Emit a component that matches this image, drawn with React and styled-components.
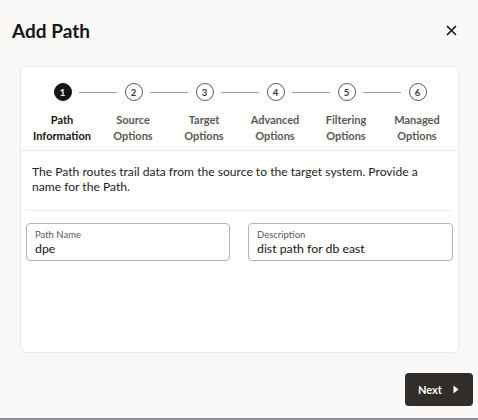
import React from "react";
import styled, { createGlobalStyle } from "styled-components";

const GlobalStyle = createGlobalStyle`
  body {
    margin: 0;
    background: #f9f8f6;
    font-family: Lato, "Noto Sans", sans-serif;
    color: #161513;
  }
`;

const steps = [
  ["Path", "Information"],
  ["Source", "Options"],
  ["Target", "Options"],
  ["Advanced", "Options"],
  ["Filtering", "Options"],
  ["Managed", "Options"],
];

function App() {
  return (
    <Page>
      <GlobalStyle />
      <Header>
        <Title>Add Path</Title>
        <CloseButton aria-label="Close">
          <svg width="11" height="11" viewBox="0 0 11 11">
            <path d="M1 1L10 10M10 1L1 10" stroke="#161513" strokeWidth="1.6" />
          </svg>
        </CloseButton>
      </Header>

      <Card>
        <Stepper>
          {steps.map((label, i) => (
            <Step key={i}>
              <StepTrack>
                <Segment $hidden={i === 0} $side="left" />
                <StepCircle $active={i === 0}>{i + 1}</StepCircle>
                <Segment $hidden={i === steps.length - 1} $side="right" />
              </StepTrack>
              <StepLabel $active={i === 0}>
                {label[0]}
                <br />
                {label[1]}
              </StepLabel>
            </Step>
          ))}
        </Stepper>

        <Content>
          <Intro>
            The Path routes trail data from the source to the target system. Provide a
            name for the Path.
          </Intro>
          <Divider />
          <Fields>
            <Field>
              <FieldLabel>Path Name</FieldLabel>
              <FieldValue>dpe</FieldValue>
            </Field>
            <Field>
              <FieldLabel>Description</FieldLabel>
              <FieldValue>dist path for db east</FieldValue>
            </Field>
          </Fields>
        </Content>
      </Card>

      <Footer>
        <NextButton>
          Next
          <svg width="6" height="9" viewBox="0 0 6 9">
            <path d="M0.5 0.5L5.5 4.5L0.5 8.5Z" fill="#ffffff" />
          </svg>
        </NextButton>
      </Footer>
      <BottomEdge />
    </Page>
  );
}

const Page = styled.div`
  width: 478px;
  height: 420px;
  display: flex;
  flex-direction: column;
  overflow: hidden;
`;

const Header = styled.div`
  display: flex;
  justify-content: space-between;
  align-items: flex-start;
  padding: 18px 21px 0 12px;
  height: 48px;
`;

const Title = styled.h1`
  margin: 0;
  font-size: 19px;
  line-height: 26px;
  font-weight: 700;
`;

const CloseButton = styled.div`
  display: flex;
  padding-top: 7px;
`;

const Card = styled.div`
  margin: 0 19px 0 20px;
  height: 287px;
  box-sizing: border-box;
  background: #ffffff;
  border: 1px solid #ebe9e6;
  border-radius: 6px;
  display: flex;
  flex-direction: column;
`;

const Stepper = styled.div`
  display: flex;
  padding: 16px 5.5px 0;
  height: 83px;
  box-sizing: border-box;
`;

const Step = styled.div`
  flex: 1;
  display: flex;
  flex-direction: column;
  align-items: center;
`;

const StepTrack = styled.div`
  width: 100%;
  display: flex;
  align-items: center;
`;

const Segment = styled.div`
  flex: 1;
  height: 1px;
  background: ${(p) => (p.$hidden ? "transparent" : "#a09d99")};
  margin: ${(p) => (p.$side === "left" ? "0 8px 0 0" : "0 0 0 7px")};
`;

const StepCircle = styled.div`
  width: 18px;
  height: 18px;
  box-sizing: border-box;
  border-radius: 50%;
  border: 1.5px solid ${(p) => (p.$active ? "#161513" : "#5b5854")};
  background: ${(p) => (p.$active ? "#161513" : "#ffffff")};
  color: ${(p) => (p.$active ? "#ffffff" : "#3d3a37")};
  font-size: 9.5px;
  font-weight: 700;
  display: flex;
  align-items: center;
  justify-content: center;
`;

const StepLabel = styled.div`
  margin-top: 11px;
  font-size: 11px;
  line-height: 16px;
  font-weight: 700;
  text-align: center;
  white-space: nowrap;
  color: ${(p) => (p.$active ? "#161513" : "#5b5854")};
`;

const Content = styled.div`
  flex: 1;
  border-top: 1px solid #ebe9e6;
  padding: 0 5px;
`;

const Intro = styled.p`
  margin: 13px 6px 0;
  font-size: 12.1px;
  line-height: 15px;
  color: #1f1d1b;
`;

const Divider = styled.div`
  height: 1px;
  background: #efedeb;
  margin-top: 16px;
`;

const Fields = styled.div`
  display: grid;
  grid-template-columns: 204px 205px;
  justify-content: space-between;
  margin-top: 12px;
`;

const Field = styled.div`
  height: 38px;
  box-sizing: border-box;
  border: 1px solid #b5b2ae;
  border-radius: 4px;
  padding: 5px 8px 0;
  display: flex;
  flex-direction: column;
`;

const FieldLabel = styled.span`
  font-size: 9.5px;
  line-height: 12px;
  color: #5b5854;
`;

const FieldValue = styled.span`
  font-size: 12.3px;
  line-height: 15px;
  color: #161513;
`;

const Footer = styled.div`
  display: flex;
  justify-content: flex-end;
  padding: 20px 5px 0 0;
`;

const NextButton = styled.div`
  width: 68px;
  height: 33px;
  box-sizing: border-box;
  background: #312d2a;
  border-radius: 4px;
  color: #ffffff;
  font-size: 11px;
  font-weight: 700;
  display: flex;
  align-items: center;
  justify-content: space-between;
  padding: 0 14px 0 13px;
`;

const BottomEdge = styled.div`
  margin-top: auto;
  height: 2px;
  background: #8e8a97;
`;

export default App;
